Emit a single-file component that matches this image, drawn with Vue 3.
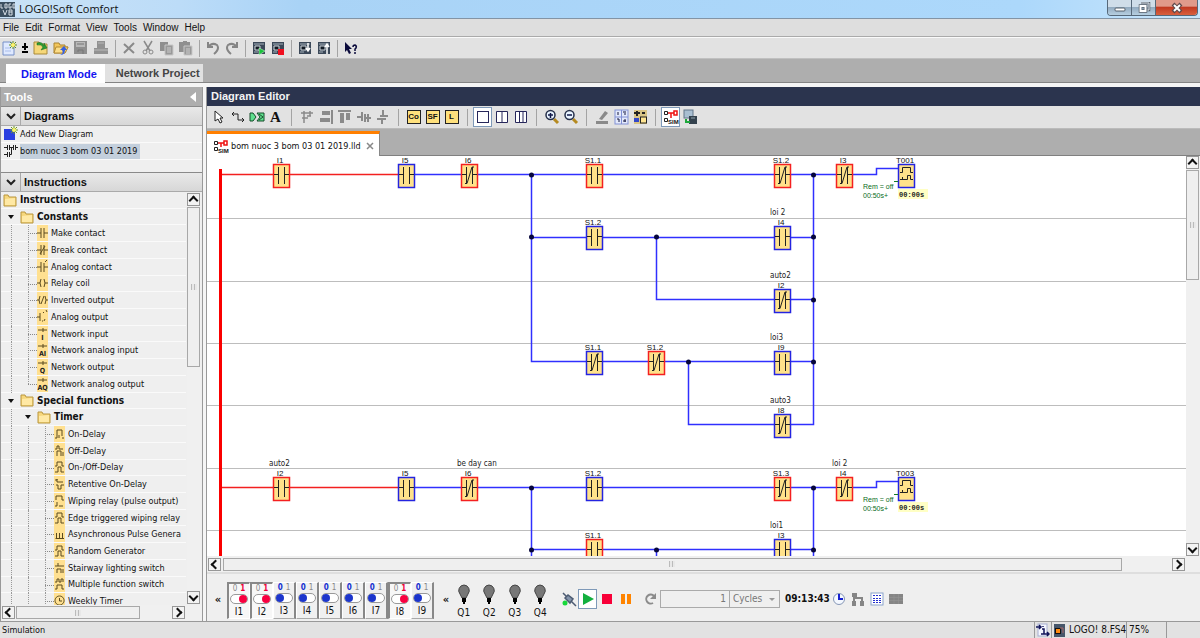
<script setup>
import { ref } from 'vue'

const menus = ['File', 'Edit', 'Format', 'View', 'Tools', 'Window', 'Help']

const icons = {
  make: 'M0 8H4M7 8H11M4 3V13M7 3V13',
  brk: 'M0 8H4M7 8H11M4 3V13M7 3V13M3 12L8 4',
  analog: 'M0 8H4M7 8H11M4 3V13M7 4V13M8 3L10 1',
  coil: 'M0 8H3M8 8H11M4 4Q2 8 4 12M7 4Q9 8 7 12',
  inv: 'M0 8H2M9 8H11M3 4Q1 8 3 12M8 4Q10 8 8 12M4 12L7 4',
  aout: 'M0 8H3M3 4V12M5 12H6M7 12L8 10M6 4L7 3M9 1L10 3',
  net: 'M1 4H10M6 2V6',
  on: 'M1 12H3M3 12V4H8V10M5 12V9M8 12H10',
  off: 'M1 6H3V3H5V6H9M3 13V8H7V13M9 13V9',
  onoff: 'M1 7H3V3H8V7H10M1 13H4V8H7V13H10',
  ret: 'M1 4H3V3V6H9M2 9H4V13H7V9H10',
  wipe: 'M2 7V3H8V7H10M1 13H3V9M5 13H9',
  pulse: 'M1.5 12.5H10M2.500 12V7M5.500 12V7M8.500 12V7',
  stair: 'M1 6H4V3M4 6H10M3 13V9H7V13M9 13V9',
  multi: 'M1 6H3V3H5V6H7V3H9V6M1 13H3V9H8V13H10',
  clock: 'M5.5 3A4.5 4.5 0 1 0 5.6 3M5.5 5V8H8'
}
const L = (level, text, icon, glyph) => ({ level, text, icon, glyph })
const rows = [
  L(0, 'Instructions'), L(1, 'Constants'),
  L(2, 'Make contact', 'make'), L(2, 'Break contact', 'brk'), L(2, 'Analog contact', 'analog'),
  L(2, 'Relay coil', 'coil'), L(2, 'Inverted output', 'inv'), L(2, 'Analog output', 'aout'),
  L(2, 'Network input', 'net', 'I'), L(2, 'Network analog input', 'net', 'AI'),
  L(2, 'Network output', 'net', 'Q'), L(2, 'Network analog output', 'net', 'AQ'),
  L(1, 'Special functions'), L(2, 'Timer'),
  L(3, 'On-Delay', 'on'), L(3, 'Off-Delay', 'off'), L(3, 'On-/Off-Delay', 'onoff'),
  L(3, 'Retentive On-Delay', 'ret'), L(3, 'Wiping relay (pulse output)', 'wipe'),
  L(3, 'Edge triggered wiping relay', 'onoff'), L(3, 'Asynchronous Pulse Genera', 'pulse'),
  L(3, 'Random Generator', 'onoff'), L(3, 'Stairway lighting switch', 'stair'),
  L(3, 'Multiple function switch', 'multi'), L(3, 'Weekly Timer', 'clock')
]
const guide = (row, i) => {
  if (i < row.level - 1) return 'line'
  if (!row.icon) return 'arrow'
  return row.glyph === 'AQ' ? 'tee last' : 'tee'
}

const C = (x, y, name, on, nc, note) => ({ x, y, name, on, nc, note })
const contacts = [
  C(281, 175, 'I1', 1, 0), C(406, 175, 'I5', 0, 0), C(469, 175, 'I6', 1, 1), C(594, 175, 'S1.1', 1, 0),
  C(782, 175, 'S1.2', 1, 1), C(844, 175, 'I3', 1, 1),
  C(594, 237, 'S1.2', 0, 0), C(782, 237, 'I4', 0, 0, 'loi 2'),
  C(782, 300, 'I2', 0, 1, 'auto2'),
  C(594, 362, 'S1.1', 0, 1), C(656, 362, 'S1.2', 1, 1), C(782, 362, 'I9', 0, 0, 'loi3'),
  C(782, 425, 'I8', 0, 1, 'auto3'),
  C(281, 488, 'I2', 1, 0, 'auto2'), C(406, 488, 'I5', 0, 0), C(469, 488, 'I6', 1, 1, 'be day can'),
  C(594, 488, 'S1.2', 0, 0), C(782, 488, 'S1.3', 1, 1), C(844, 488, 'I4', 1, 1, 'loi 2'),
  C(594, 550, 'S1.1', 1, 0), C(782, 550, 'I3', 0, 0, 'loi1')
]
const timers = [{ y: 175, name: 'T001' }, { y: 488, name: 'T003' }]
const nodes = [[531, 175], [813, 175], [531, 237], [656, 237], [813, 237], [813, 300], [688, 362], [813, 362], [531, 488], [813, 488], [531, 550], [656, 550], [813, 550]]
const rungs = [218, 281, 343, 405, 468, 530]

const inputs = ref(['I1', 'I2', 'I3', 'I4', 'I5', 'I6', 'I7', 'I8', 'I9'].map(n => ({ name: n, on: ['I1', 'I2', 'I8'].includes(n) })))
const outputs = ['Q1', 'Q2', 'Q3', 'Q4']
const cycles = ref('1')
</script>

<template>
  <div class="app">
    <header class="title">
      <svg class="logo" width="15" height="15" viewBox="0 0 15 15"><rect width="15" height="15" fill="#3c5060" /><path d="M1 2V6H3M5 2H7V6H5ZM11 2H9V6H11V4M13 2H15V6H13ZM3 8L5 13L7 8M9 8H12V13H9ZM9 10H12" stroke="#d5dde4" fill="none" /></svg>
      <span>LOGO!Soft Comfort</span>
      <div class="winbtns">
        <button aria-label="Minimize"><svg width="14" height="12"><rect x="2" y="6" width="10" height="3" rx="1" fill="#fff" stroke="#55606c" /></svg></button>
        <button aria-label="Restore"><svg width="14" height="12"><path d="M4 1H12V8H9" fill="none" stroke="#59636e" stroke-width="2.500" /><path d="M4 1H12V8H9" fill="none" stroke="#dfe6ec" /><rect x="3.500" y="4" width="5" height="5" fill="none" stroke="#59636e" stroke-width="3.500" /><rect x="3.500" y="4" width="5" height="5" fill="none" stroke="#fff" stroke-width="2" /></svg></button>
        <button class="close" aria-label="Close"><svg width="14" height="12"><path d="M3 2L11 10M11 2L3 10" stroke="#5f4a4c" stroke-width="4" /><path d="M4 3L10 9M10 3L4 9" stroke="#fff" stroke-width="2" /></svg></button>
      </div>
    </header>
    <nav class="menu"><button v-for="m in menus" :key="m">{{ m }}</button></nav>

    <div class="bar top">
      <button class="b18" aria-label="New"><svg width="16" height="16"><path d="M1 2H9L12 5V15H1Z" fill="#dfe9ff" stroke="#7690c8" /><path d="M3 8H9M3 11H9" stroke="#a9bdeb" /><path d="M11 1V9M7 5H15M8 2L14 8M14 2L8 8" stroke="#5f8f20" /><circle cx="11" cy="5" r="2" fill="#fff36a" /></svg></button>
      <button class="b12" aria-label="More"><svg width="10" height="14"><path d="M5 2V9M2 6H8M2 11H8" stroke="#000" stroke-width="2" /></svg></button>
      <button class="b20" aria-label="Open"><svg width="16" height="16"><path d="M1 2H6L7 4H14V14H1Z" fill="#f5d779" stroke="#a98a3a" /><path d="M4 3Q9 1 11 6V3L14 8L8 10L10 7Q8 4 4 5Z" fill="#2b9c33" stroke="#126a20" stroke-width=".5" /></svg></button>
      <button class="b20" aria-label="Load"><svg width="16" height="16"><path d="M1 3H6L7 5H12V7H15L12 13H1Z" fill="#f3c65b" stroke="#a98332" /><path d="M3 7H15L12 13H1Z" fill="#fbdc87" stroke="#b48b34" /><path d="M7 15Q11 14 9 10H7L11 6L14 10H12Q12 15 7 15" fill="#355fe0" /></svg></button>
      <button class="b20" aria-label="Save"><svg width="16" height="16"><path d="M1 1H14V14H1Z" fill="#8f8f8f" /><path d="M3 2H12V7H3Z" fill="#b9b9b9" /><path d="M4 4H11M5 12V10H10V14" stroke="#777" fill="none" /></svg></button>
      <button class="b20" aria-label="Print"><svg width="16" height="16"><path d="M4 1H12V8H15V14H1V8H4Z" fill="#929292" /><path d="M5 3H11M1 10H15" stroke="#b9b9b9" /></svg></button>
      <i class="sep"></i>
      <button aria-label="Delete"><svg width="16" height="16"><path d="M3 4L13 13M13 3L3 13" stroke="#8a8a8a" stroke-width="2" /></svg></button>
      <button aria-label="Cut"><svg width="16" height="16"><path d="M4 1L10 11M12 1L6 11" stroke="#8a8a8a" stroke-width="1.500" /><circle cx="5" cy="12" r="2" fill="none" stroke="#8a8a8a" /><circle cx="11" cy="12" r="2" fill="none" stroke="#8a8a8a" /></svg></button>
      <button aria-label="Copy"><svg width="16" height="16"><path d="M1 2H9V11H1Z" fill="#8f8f8f" /><path d="M6 5H14V15H6Z" fill="#999" stroke="#c8c8c8" /><path d="M8 8H12M8 10H12M8 12H12" stroke="#ccc" /></svg></button>
      <button aria-label="Paste"><svg width="16" height="16"><path d="M1 2H5V1H9V2H12V12H1Z" fill="#8f8f8f" /><path d="M6 6H14V15H6Z" fill="#999" stroke="#c8c8c8" /><path d="M8 9H12M8 11H12M8 13H12" stroke="#ccc" /></svg></button>
      <i class="sep"></i>
      <button aria-label="Undo"><svg width="16" height="16"><path d="M3 2V7H8M3 7Q7 2 12 5Q15 9 9 14" fill="none" stroke="#858585" stroke-width="2" /></svg></button>
      <button aria-label="Redo"><svg width="16" height="16"><path d="M13 2V7H8M13 7Q9 2 4 5Q1 9 7 14" fill="none" stroke="#858585" stroke-width="2" /></svg></button>
      <i class="sep"></i>
      <button v-for="k in 4" :key="k" :class="{ gapr: k === 2 }" aria-label="Device">
        <svg width="14" height="16"><path d="M1 2H13V14H1Z" fill="#3b4858" /><path d="M2 4H12M2 12H6" stroke="#a5b0ba" /><path d="M3 6H8V10H3Z" fill="#111a24" stroke="#d0d6dc" />
          <path v-if="k === 1" d="M7 8L13 11L7 15Z" fill="#19c23b" stroke="#e0ffe4" stroke-width=".5" />
          <rect v-if="k === 2" x="7" y="9" width="6" height="6" fill="#f01020" />
          <path v-if="k === 3" d="M10 3V11M8 8L10 11L12 8" fill="none" stroke="#fff" stroke-width="1.500" />
          <path v-if="k === 4" d="M10 14V5M8 7L10 4L12 7" fill="none" stroke="#fff" stroke-width="1.500" />
        </svg>
      </button>
      <i class="sep"></i>
      <button aria-label="Context help"><svg width="16" height="16"><path d="M2 2V12L4 10L6 14L8 13L6 9H9Z" fill="#0b0b3c" /><path d="M10 7Q10 5 12 5Q14 6 13 8L12 9V11M12 12V14" fill="none" stroke="#0b0b3c" stroke-width="1.500" /></svg></button>
    </div>

    <div class="modes"><button class="active">Diagram Mode</button><button>Network Project</button></div>

    <main>
      <aside>
        <h2 class="toolhead">Tools <svg width="6" height="10"><path d="M6 0V10L0 5Z" fill="#fff" /></svg></h2>
        <h3><i><svg width="10" height="7"><path d="M1 1L5 5L9 1" fill="none" stroke="#222" stroke-width="2" /></svg></i><span>Diagrams</span></h3>
        <ul class="files">
          <li><svg width="16" height="16"><rect x="1" y="3" width="11" height="11" fill="#2a3fe0" /><path d="M11 0V8M7 4H15M8 1L14 7M14 1L8 7" stroke="#6f9a20" /><circle cx="11" cy="4" r="2" fill="#f6f36a" /></svg><span>Add New Diagram</span></li>
          <li><svg width="16" height="16"><path d="M1 4.500H4.500M4.500 2V7M6.500 2V7M6.500 4.500H10.500M10.500 2V7M12.500 2V7M12.500 4.500H15M8.500 4V11.500H6.500M6.500 9V14M4.500 9V14M4.500 11.500H1" fill="none" stroke="#222" /></svg><span class="sel">bom nuoc 3 bom 03 01 2019</span></li>
        </ul>
        <h3><i><svg width="10" height="7"><path d="M1 1L5 5L9 1" fill="none" stroke="#222" stroke-width="2" /></svg></i><span>Instructions</span></h3>
        <div class="treebox">
          <div class="treeview">
            <ul class="tree">
              <li v-for="(r, n) in rows" :key="n" :class="{ folder: !r.icon }">
                <i v-for="i in r.level" :key="i" :class="['g', guide(r, i - 1)]"></i>
                <svg v-if="!r.icon" class="fold" width="14" height="14"><path d="M1 2H5L6 4H13V13H1Z" fill="#f6d77c" stroke="#b9963f" /><path d="M2 12V6L12 5V12Z" fill="#ffe9a5" /></svg>
                <svg v-else class="leaf" width="11" height="16"><path :d="icons[r.icon]" fill="none" stroke="#5a4a20" /><text v-if="r.glyph" x="5.500" y="14" text-anchor="middle">{{ r.glyph }}</text></svg>
                <span>{{ r.text }}</span>
              </li>
            </ul>
          </div>
          <div class="vs left"><button class="up" aria-label="Scroll up"></button><div class="thumb"></div><button class="down" aria-label="Scroll down"></button></div>
        </div>
        <div class="hs small"><button class="lt" aria-label="Scroll left"></button><div class="thumb"></div><button class="rt" aria-label="Scroll right"></button></div>
      </aside>

      <section class="editor">
        <h2>Diagram Editor</h2>
        <div class="bar edit">
          <button aria-label="Select"><svg width="16" height="16"><path d="M4 2V12L7 10L9 14L11 13L9 9H12Z" fill="#fff" stroke="#222" /></svg></button>
          <button aria-label="Connect"><svg width="16" height="16"><path d="M2 5H8V11H14M4 3L2 5L4 7M12 9L14 11L12 13" fill="none" stroke="#222" /></svg></button>
          <button aria-label="Links"><svg width="16" height="16"><path d="M1 4H4L7 8L4 12H1ZM8 4H15V12H8L11 8Z" fill="#5fe08e" stroke="#174d2b" /><path d="M10 5L14 8L10 11" fill="none" stroke="#174d2b" /></svg></button>
          <button class="letter" aria-label="Text">A</button>
          <i class="sep"></i>
          <button aria-label="Snap"><svg width="16" height="16"><path d="M5 2V14M2 4H14M8 7H12M3 9H9M11 2V7" stroke="#8a8a8a" stroke-width="1.500" /></svg></button>
          <button aria-label="Align right"><svg width="16" height="16"><path d="M4 2H12V6H4ZM2 9H12V13H2ZM13 1H15V15H13Z" fill="#8a8a8a" /></svg></button>
          <button aria-label="Align top"><svg width="16" height="16"><path d="M1 1H14V3H1ZM3 4H7V14H3ZM9 4H13V11H9Z" fill="#8a8a8a" /></svg></button>
          <button aria-label="Space across"><svg width="16" height="16"><path d="M1 8H6M6 3V12M9 5V13M12 5V13M9 9H15" stroke="#8a8a8a" stroke-width="2" /></svg></button>
          <button aria-label="Space down"><svg width="16" height="16"><path d="M8 1V7M5 7H13M2 10H11M7 10V15" stroke="#8a8a8a" stroke-width="2" /></svg></button>
          <i class="sep"></i>
          <button class="y"><b>Co</b></button><button class="y"><b>SF</b></button><button class="y"><b>L</b></button>
          <i class="sep"></i>
          <button class="on" aria-label="Single view"><svg width="14" height="14"><rect x="1.500" y="1.500" width="11" height="11" fill="#fff" stroke="#26265a" /></svg></button>
          <button aria-label="Two columns"><svg width="14" height="14"><path d="M1.500 1.500H12.500V12.500H1.500ZM7 2V12" fill="#fff" stroke="#26265a" /></svg></button>
          <button aria-label="Three columns"><svg width="14" height="14"><path d="M1.500 1.500H12.500V12.500H1.500ZM5.500 2V12M9 2V12" fill="#fff" stroke="#26265a" /></svg></button>
          <i class="sep"></i>
          <button v-for="z in ['M4 6H9M6.500 4V9', 'M4 6H9']" :key="z" aria-label="Zoom"><svg width="16" height="16"><path d="M10 10L14 14" stroke="#b58a20" stroke-width="3" /><circle cx="6.500" cy="6" r="4.500" fill="#e8f3ff" stroke="#26304a" stroke-width="1.500" /><path :d="z" stroke="#101848" stroke-width="1.500" /></svg></button>
          <i class="sep"></i>
          <button aria-label="Highlight"><svg width="16" height="16"><path d="M5 10L11 2L14 4L8 11ZM2 12H14V15H2Z" fill="#8a8a8a" /></svg></button>
          <button aria-label="Page layout"><svg width="16" height="16"><rect x="2" y="1" width="13" height="14" fill="#e3e9fa" stroke="#8291d5" /><path d="M8.500 1V15M2 8H15" stroke="#8291d5" /><path d="M5 3V6M10 3H13M11 5H13M4 10H6V13M12 10V13M10 12H13" stroke="#15163f" fill="none" /></svg></button>
          <button aria-label="Block settings"><svg width="16" height="16"><path d="M2 1H15V15H2Z" fill="#d8c486" /><path d="M2 4H8M5 2V7M10 4H13" stroke="#222" stroke-width="2" /><rect x="2" y="9" width="5" height="4" fill="#3448c8" /><rect x="8.500" y="8" width="6" height="6" fill="#ffe591" stroke="#222" /></svg></button>
          <i class="sep"></i>
          <button class="on" aria-label="Simulation"><svg class="simi" width="16" height="16"><path d="M1.500 2.500H4.500V5.500H1.500ZM1.500 9.500H4.500V12.500H1.500Z" fill="none" stroke="#222" /><path d="M5 4H11M8 4V9M11 2H14V6H11Z" fill="none" stroke="#e11" stroke-width="1.500" /><text x="5" y="15">SIM</text></svg></button>
          <button aria-label="Online test"><svg width="16" height="16"><rect x="2" y="1" width="9" height="8" fill="#a9bfd2" stroke="#62778a" /><rect x="7" y="7" width="8" height="8" fill="#34424e" /><path d="M4 10V13H8" stroke="#1ea83c" fill="none" stroke-width="2" /><path d="M9 9H13" stroke="#90a2ad" /></svg></button>
        </div>
        <div class="tabs">
          <button class="tab"><svg class="simi" width="16" height="16"><path d="M1.500 3.500H4.500V6.500H1.500ZM1.500 9.500H4.500V12.500H1.500Z" fill="none" stroke="#222" /><path d="M5 5H11M8 5V9M11 3H14V7H11Z" fill="none" stroke="#e11" stroke-width="1.500" /><text x="5" y="15">SIM</text></svg><span>bom nuoc 3 bom 03 01 2019.lld</span><svg class="x" width="8" height="8"><path d="M1 1L7 7M7 1L1 7" stroke="#888" stroke-width="1.500" /></svg></button>
        </div>
        <div class="work">
          <svg class="ladder" width="100%" height="100%">
            <g transform="translate(-207 -156)">
              <path v-for="y in rungs" :key="y" :d="`M207 ${y}.500H3000`" stroke="#bdbdbd" />
              <g fill="none" stroke="#3030ff" stroke-width="1.500">
                <path d="M406 174.500H876.500V168.500H898M531 237.500H813M656.500 237V299.500H813M531.500 174V361.500H813.500M688.500 362V424.500H813.500V174M406 487.500H876.500V481.500H898M531.500 487V560M531 549.500H813M656.500 549V560M813.500 487V560" />
              </g>
              <path d="M222 174.500H398M222 487.500H398" stroke="#f32020" stroke-width="1.500" />
              <path d="M220.500 169V560" stroke="#fa0000" stroke-width="3" />
              <circle v-for="(n, i) in nodes" :key="i" :cx="n[0] + .5" :cy="n[1]" r="2.500" fill="#06063c" />
              <g v-for="(c, i) in contacts" :key="'c' + i" :transform="`translate(${c.x} ${c.y})`">
                <rect x="-7.500" y="-10.500" width="16" height="23" fill="#ffe28a" :stroke="c.on ? '#f42020' : '#2424e0'" stroke-width="1.500" />
                <path d="M-7 -.5H-2.500M3.500 -.5H8M-2.500 -8V9M3.500 -8V9" fill="none" stroke="#222" />
                <path v-if="c.nc" d="M-4 8.500H-2L3 -8H5" fill="none" stroke="#222" />
                <text class="pin" x="-1" y="-12" text-anchor="middle">{{ c.name }}</text>
                <text v-if="c.note" class="note" x="-12" y="-22">{{ c.note }}</text>
              </g>
              <g v-for="t in timers" :key="t.name" :transform="`translate(906 ${t.y})`">
                <rect x="-7.500" y="-10.500" width="16" height="23" fill="#ffe28a" stroke="#2424e0" stroke-width="1.500" />
                <path d="M-6 -2.500H-3.500V-7.500H4.500V-2.500H7M-6 4.500H1.500V.5H4.500V4.500H7M-3.500 2V4" fill="none" stroke="#222" />
                <path d="M-12 6.500H-8" stroke="#127a25" />
                <text class="pin" x="-1" y="-12" text-anchor="middle">{{ t.name }}</text>
                <text class="rem" x="-43" y="14">Rem = off</text><text class="rem" x="-43" y="23">00:50s+</text>
                <rect x="-8" y="14" width="30" height="10" fill="#ffffc4" /><text class="time" x="-7" y="22">00:00s</text>
              </g>
            </g>
          </svg>
          <div class="vs"><button class="up" aria-label="Scroll up"></button><div class="thumb"></div><button class="down" aria-label="Scroll down"></button></div>
        </div>
        <div class="hs"><button class="lt" aria-label="Scroll left"></button><div class="thumb"></div><button class="rt" aria-label="Scroll right"></button></div>
        <div class="sim">
          <button class="more" aria-label="Previous inputs">«</button>
          <div class="inputs">
            <button v-for="p in inputs" :key="p.name" :class="{ pressed: p.on }" @click="p.on = !p.on">
              <span class="bits"><i>0</i><i>1</i></span><span class="sw"></span><span class="nm">{{ p.name }}</span>
            </button>
          </div>
          <button class="more two" aria-label="Previous outputs">«</button>
          <div class="outs">
            <div v-for="q in outputs" :key="q"><svg width="14" height="20"><path d="M7 1A5.500 5.500 0 0 1 11 10L9 14H5L3 10A5.500 5.500 0 0 1 7 1Z" fill="#777" stroke="#444" /><path d="M5 15H9M5 17H9M6 19H8" stroke="#000" stroke-width="2" /></svg><span>{{ q }}</span></div>
          </div>
          <div class="ctl">
            <button aria-label="Power"><svg width="16" height="16"><path d="M2 2L5 5M10 10L15 15M4 7L7 4L12 8L9 12Z" fill="#8494aa" stroke="#4c5b72" stroke-width="1.500" /><circle cx="4" cy="12" r="2.500" fill="#17d83a" /></svg></button>
            <button class="on" aria-label="Start"><svg width="14" height="14"><path d="M2 1L13 7L2 13Z" fill="#13b03f" /></svg></button>
            <button aria-label="Stop"><svg width="10" height="10"><rect width="10" height="10" fill="#f80038" /></svg></button>
            <button aria-label="Pause"><svg width="10" height="10"><path d="M0 0H4V10H0ZM6 0H10V10H6Z" fill="#ff8400" /></svg></button>
          </div>
          <button class="again" aria-label="Run cycles"><svg width="12" height="12"><path d="M10 3A4.500 4.500 0 1 0 9 10" fill="none" stroke="#8c8c8c" stroke-width="2" /><path d="M12 0V6H6Z" fill="#8c8c8c" /></svg></button>
          <input v-model="cycles" aria-label="Count">
          <div class="pick"><select aria-label="Unit"><option>Cycles</option></select></div>
          <time>09:13:43</time>
          <div class="ctl">
            <button aria-label="Clock"><svg width="14" height="14"><circle cx="7" cy="7" r="5.500" fill="#f4f8ff" stroke="#8596b5" /><path d="M7 2V7H11" fill="none" stroke="#1620d0" stroke-width="2" /></svg></button>
            <button aria-label="Network"><svg width="14" height="14"><path d="M1 1H6V5H1ZM1 9H5V14H1ZM9 9H13V14H9Z" fill="#858585" /><path d="M3 4V10M3 6H11V10" fill="none" stroke="#858585" stroke-width="2" /></svg></button>
            <button aria-label="Variables"><svg width="14" height="14"><rect x="1" y="1" width="12" height="12" fill="#fff" stroke="#8aa3cb" /><path d="M3 3.500H11M3 6.500H11M3 8.500H11M3 10.500H11" stroke="#2330cf" stroke-dasharray="2 1" /></svg></button>
            <button aria-label="Memory"><svg width="14" height="10"><rect width="14" height="10" fill="#858585" /><path d="M0 3.500H14M0 6.500H14M5 0V10M9.500 0V10" stroke="#979797" stroke-width=".5" /></svg></button>
          </div>
        </div>
      </section>
    </main>

    <footer>
      <span class="state">Simulation</span>
      <span class="c1"><svg width="14" height="15"><rect x="2" y="1" width="9" height="12" fill="#f5f7ff" stroke="#a5add0" /><path d="M0 4H4M3 2L5 4L3 6M9 11H13M11 9L13 11L11 13M6 6H8V11M5 11H9M7 3V4" fill="none" stroke="#11145a" stroke-width="1.500" /></svg></span>
      <span class="c2"><svg width="11" height="13"><rect width="11" height="13" fill="#46566a" /><rect x="1.500" y="4.500" width="5" height="5" fill="#ff8a10" stroke="#111" /><path d="M6 4H9V9" fill="none" stroke="#a66" /></svg>LOGO! 8.FS4</span>
      <span class="c3">75%</span><span class="c4"></span>
    </footer>
  </div>
</template>

<style>
body { margin: 0; overflow: hidden; }
</style>
<style scoped>
* { box-sizing: border-box; }
.app { height: 100vh; display: flex; flex-direction: column; background: #efefef; color: #111; font: 10px/16px "DejaVu Sans Condensed", "DejaVu Sans", sans-serif; }
button { font: inherit; color: inherit; background: none; border: 0; padding: 0; margin: 0; }
ul, h2, h3 { margin: 0; padding: 0; list-style: none; }
i { font-style: normal; }
svg { display: block; flex: none; }
.title { height: 19px; flex: none; display: flex; align-items: center; gap: 4px; background: linear-gradient(90deg, #c9e2f6 0, #bcdcf8 15%, #a9d3f6 25%, #acd8fb 85%, #c8e5fb 100%); border-bottom: 1px solid #8394a5; font: 11px/18px "Open Sans", sans-serif; }
.winbtns { margin: 0 2px 0 auto; align-self: flex-start; display: flex; height: 16px; border: 1px solid #566879; border-top: 0; border-radius: 0 0 4px 4px; overflow: hidden; }
.winbtns button { width: 24px; display: grid; place-items: center; background: linear-gradient(#cfdde9 0 45%, #93abc0 50%, #b6cfe1); border-right: 1px solid #566879; }
.winbtns .close { width: 41px; border: 0; background: linear-gradient(#e09a8b 0 40%, #c23b23 50%, #d8603f); }
.menu { height: 18px; flex: none; display: flex; gap: 6px; padding: 0 3px; align-items: center; background: #dedede; border-bottom: 1px solid #aaa; font: 10px/16px "Liberation Sans", Arial, sans-serif; }
.bar { flex: none; display: flex; align-items: center; background: #e2e2e2; }
.bar button { width: 19px; height: 20px; display: grid; place-items: center; flex: none; }
.top { height: 22px; padding-left: 1px; border-top: 1px solid #fafafa; border-bottom: 1px solid #c0c0c0; }
.bar .b18 { width: 18px; } .bar .b12 { width: 12px; } .bar .b20 { width: 20px; }
.bar .gapr { margin-right: 8px; position: relative; }
.gapr::after { content: ""; position: absolute; right: -5px; top: 2px; height: 17px; border-left: 1px solid #a4a4a4; }
.sep { width: 8px; height: 17px; flex: none; display: grid; justify-content: center; }
.sep::before { content: ""; border-left: 1px solid #a4a4a4; }
.edit .sep { width: 12px; }
.modes { height: 24px; flex: none; display: flex; align-items: flex-end; padding-left: 6px; background: #aeaeae; border-bottom: 1px solid #848484; font: bold 11px/18px "Liberation Sans", Arial, sans-serif; }
.modes button { height: 18px; padding: 0 3px 0 11px; background: #e1e1e1; color: #454545; }
.modes .active { height: 19px; margin-bottom: -1px; padding: 0 8px 0 15px; background: #fff; color: #1414f0; }
main { flex: 1; min-height: 0; display: flex; gap: 3px; padding-top: 4px; background: #f5f5f5; }
aside { width: 203px; flex: none; display: flex; flex-direction: column; border-left: 1px solid #999; border-right: 1px solid #999; background: #efefef; }
h2, h3 { flex: none; font: bold 11px/18px "Liberation Sans", Arial, sans-serif; }
.toolhead { height: 19px; display: flex; align-items: center; justify-content: space-between; padding: 0 6px 0 3px; background: #aeaeae; color: #fff; }
h3 { height: 20px; display: flex; background: linear-gradient(#e9e9e9, #d7d7d7); border-top: 1px solid #8a8a8a; border-bottom: 1px solid #aaa; }
h3 i { width: 20px; display: grid; place-items: center; border-right: 1px solid #aaa; margin-right: 3px; }
.files { height: 46px; flex: none; font-size: 9px; }
.files li { display: flex; align-items: center; height: 17px; gap: 1px; padding-left: 2px; border-bottom: 1px solid #fafafa; }
.files .sel { background: #c3cfdc; padding-right: 3px; height: 15px; line-height: 15px; }
.treebox { flex: 1; min-height: 0; display: flex; }
.treeview { flex: 1; min-width: 0; overflow: hidden; }
.tree { height: 418px; display: grid; grid-auto-rows: 1fr; }
.tree li { display: flex; align-items: center; padding-left: 2px; white-space: nowrap; border-bottom: 1px solid #fafafa; min-height: 0; }
.tree li:not(.folder) { font-size: 9px; }
.tree span { padding-left: 3px; }
.folder { font-weight: bold; }
.g { width: 17px; flex: none; align-self: stretch; position: relative; }
.g.line::before, .g.tee::before { content: ""; position: absolute; left: 8px; top: 0; bottom: -1px; border-left: 1px dotted #999; }
.g.last::before { bottom: 8px; }
.g.tee::after { content: ""; position: absolute; left: 8px; right: 0; top: 8px; border-top: 1px dotted #888; }
.g.arrow::after { content: ""; position: absolute; left: 5px; top: 6px; border: 3px solid transparent; border-top: 4px solid #111; border-bottom: 0; }
.leaf { background: #ffe090; }
.leaf text { font: bold 7px "DejaVu Sans Condensed", sans-serif; fill: #222; }
.vs { width: 14px; flex: none; display: flex; flex-direction: column; background: #f0f0f0; }
.vs.left { margin: 1px; }
.vs button, .hs button { width: 13px; height: 13px; flex: none; border: 1px solid #979797; background: #f3f3f3; display: grid; place-items: center; }
.vs button::before, .hs button::before { content: ""; width: 5px; height: 5px; border: solid #111; border-width: 2px 0 0 2px; }
.up::before { transform: translateY(1px) rotate(45deg); } .down::before { transform: translateY(-1px) rotate(225deg); }
.lt::before { transform: translateX(1px) rotate(-45deg); } .rt::before { transform: translateX(-1px) rotate(135deg); }
.thumb { border: 1px solid #a8a8a8; background: #efefef; display: grid; place-items: center; }
.thumb::before { content: ""; width: 6px; height: 6px; background: repeating-linear-gradient(90deg, #bbb 0 1px, #e8e8e8 1px 3px); }
.vs .thumb { width: 13px; height: 110px; margin-top: 1px; }
.vs.left .thumb { height: 160px; }
.vs .down { margin-top: auto; }
.hs { height: 16px; flex: none; display: flex; align-items: center; padding: 0 15px 0 1px; background: #f0f0f0; }
.hs .thumb { height: 13px; margin: 0 2px; flex: none; width: 92%; }
.hs .rt { margin-left: auto; }
.hs.small { height: 15px; padding-right: 17px; margin-bottom: 1px; }
.hs.small .thumb { width: 124px; margin-left: 1px; }
.editor { flex: 1; min-width: 0; display: flex; flex-direction: column; border-left: 1px solid #999; }
.editor h2 { height: 19px; padding-left: 4px; background: #2b344e; color: #f3f3f3; }
.edit { height: 23px; padding-left: 2px; border-bottom: 1px solid #bbb; }
.edit .on, .ctl .on { background: #fff; border: 1px solid #7e99b8; }
.edit .letter { font: bold 15px/18px "Liberation Serif", serif; }
.y b { width: 14px; height: 14px; display: grid; place-items: center; border: 1px solid #222; background: #ffe17d; font: bold 8px/12px "Liberation Sans", sans-serif; }
.simi text { font: bold 6px "Liberation Sans", sans-serif; fill: #111; }
.tabs { height: 27px; flex: none; display: flex; background: #aeaeae; border-bottom: 1px solid #808080; }
.tab { height: 26px; margin: 2px 0 -1px; display: flex; align-items: center; gap: 2px; padding: 0 5px 0 6px; background: #fff; border-top: 3px solid #ff7f00; border-right: 1px solid #888; font-size: 9px; }
.tab .x { margin-left: 3px; }
.work { flex: 1; min-height: 0; display: flex; background: #fff; }
.ladder { flex: 1; min-width: 0; overflow: hidden; }
.pin { font: 8px "Liberation Sans", sans-serif; fill: #111; }
.note { font: 8px "DejaVu Sans Condensed", sans-serif; fill: #222; }
.rem { font: 7px "Liberation Sans", sans-serif; fill: #086a20; }
.time { font: bold 7px "Liberation Mono", monospace; fill: #222; }
.sim { height: 49px; flex: none; display: flex; align-items: center; border-top: 2px solid #dedede; background: #efefef; padding-left: 2px; }
.more { width: 18px; font-weight: bold; font-size: 11px; height: 20px; padding-top: 4px; }
.more.two { width: 24px; }
.inputs { display: flex; padding-top: 7px; height: 46px; }
.inputs button { width: 23px; height: 37px; display: flex; flex-direction: column; align-items: center; border: 1px solid #fff; border-right: 2px solid #888; border-bottom-color: #aaa; background: #f0f0f0; }
.inputs .pressed { border: 1px solid #fff; border-left: 2px solid #888; border-top: 2px solid #888; background: #f7f7f7; }
.bits { display: flex; gap: 3px; font-size: 8px; line-height: 10px; color: #888; height: 10px; }
.bits i:first-child { color: #1530d0; font-weight: bold; }
.pressed .bits i:first-child { color: #888; font-weight: normal; }
.pressed .bits i:last-child { color: #f00038; font-weight: bold; }
.sw { width: 18px; height: 10px; border: 1px solid #999; border-radius: 5px; background: #fff; display: flex; }
.sw::before { content: ""; width: 8px; height: 8px; border-radius: 4px; background: #1c35cc; }
.pressed .sw { justify-content: flex-end; } .pressed .sw::before { background: #f80040; }
.nm { line-height: 15px; }
.outs { display: grid; grid-template-columns: repeat(4, 1fr); width: 102px; margin-left: -7px; }
.outs div { display: flex; flex-direction: column; align-items: center; padding-top: 7px; line-height: 13px; }
.outs span { padding-top: 2px; }
.ctl { display: flex; align-items: center; padding-top: 2px; }
.outs + .ctl { padding-left: 6px; }
.ctl button { width: 19px; height: 20px; display: grid; place-items: center; }
.again { width: 16px; margin-left: 9px; padding-top: 2px; }
.sim input { width: 70px; height: 18px; margin: 2px 0 0; padding: 0 3px; text-align: right; border: 1px solid #aaa; background: #efefef; color: #777; font: inherit; border-radius: 0; }
.pick { position: relative; margin-top: 2px; }
.pick::after { content: ""; position: absolute; right: 5px; top: 8px; border: 3px solid transparent; border-top: 3px solid #999; border-bottom: 0; }
.pick select { width: 50px; height: 18px; display: block; appearance: none; border: 1px solid #aaa; border-left: 0; border-radius: 0; background: #efefef; color: #777; font: inherit; padding: 0 3px; }
time { font-weight: bold; padding: 2px 0 0 5px; }
footer { height: 17px; flex: none; display: flex; align-items: stretch; background: #e2e2e2; border-top: 1px solid #999; }
footer span { display: flex; align-items: center; border-right: 1px solid #999; white-space: nowrap; }
.state { flex: 1; padding-left: 2px; font-size: 9px; }
.c1 { width: 17px; justify-content: center; } .c2 { width: 75px; gap: 4px; padding-left: 2px; } .c3 { width: 40px; padding-left: 2px; } .c4 { width: 33px; }
footer .c4 { border: 0; }
</style>
